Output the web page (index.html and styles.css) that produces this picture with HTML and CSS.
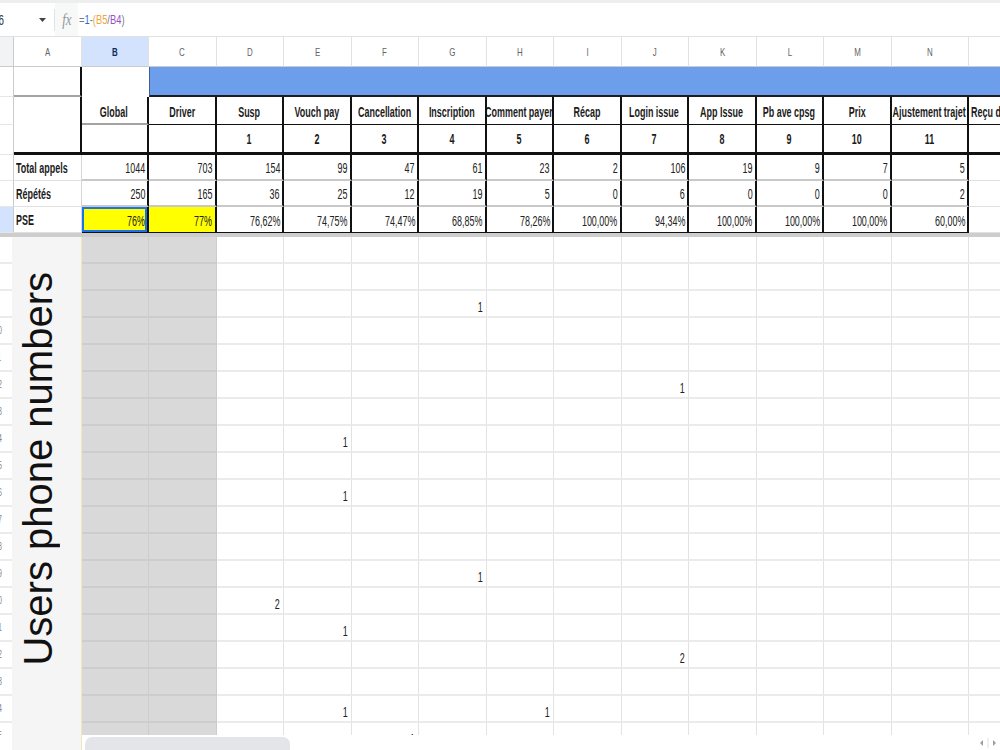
FILE: index.html
```html
<!DOCTYPE html>
<html lang="fr">
<head>
<meta charset="utf-8">
<title>Appels répétés – PSE</title>
<link rel="stylesheet" href="styles.css">
</head>
<body>
<div class="app">
  <div class="toolbar-edge"></div>

  <div class="fbar">
    <div class="namebox"><span class="tx">B6</span></div>
    <svg class="caret" width="7" height="4" viewBox="0 0 7 4"><path d="M0 0h7L3.5 4z" fill="#444"/></svg>
    <div class="sep"></div>
    <div class="fx"><span class="tx">fx</span></div>
    <div class="formula"><span class="tx"><span class="op">=</span><span class="num">1</span><span class="op">-</span><span class="ref1">(B5</span><span class="op">/</span><span class="ref2">B4</span><span class="op">)</span></span></div>
  </div>

  <!-- frozen header rows -->
  <div class="sheet frozen">
    <div class="c hd rn0"></div>
    <div class="c hd"><span class="tx">A</span></div>
    <div class="c hd on"><span class="tx">B</span></div>
    <div class="c hd"><span class="tx">C</span></div>
    <div class="c hd"><span class="tx">D</span></div>
    <div class="c hd"><span class="tx">E</span></div>
    <div class="c hd"><span class="tx">F</span></div>
    <div class="c hd"><span class="tx">G</span></div>
    <div class="c hd"><span class="tx">H</span></div>
    <div class="c hd"><span class="tx">I</span></div>
    <div class="c hd"><span class="tx">J</span></div>
    <div class="c hd"><span class="tx">K</span></div>
    <div class="c hd"><span class="tx">L</span></div>
    <div class="c hd"><span class="tx">M</span></div>
    <div class="c hd"><span class="tx">N</span></div>
    <div class="c hd"><span class="tx">O</span></div>

    <div class="c rn"></div>
    <div class="c a1"></div>
    <div class="c b1"></div>
    <div class="c band"></div>

    <div class="c rn"></div>
    <div class="c a23"></div>
    <div class="c th b2"><span class="tx">Global</span></div>
    <div class="c th"><span class="tx">Driver</span></div>
    <div class="c th"><span class="tx">Susp</span></div>
    <div class="c th"><span class="tx">Vouch pay</span></div>
    <div class="c th"><span class="tx">Cancellation</span></div>
    <div class="c th"><span class="tx">Inscription</span></div>
    <div class="c th"><span class="tx">Comment payer</span></div>
    <div class="c th"><span class="tx">Récap</span></div>
    <div class="c th"><span class="tx">Login issue</span></div>
    <div class="c th"><span class="tx">App Issue</span></div>
    <div class="c th"><span class="tx">Pb ave cpsg</span></div>
    <div class="c th"><span class="tx">Prix</span></div>
    <div class="c th"><span class="tx">Ajustement trajet</span></div>
    <div class="c th l"><span class="tx">Reçu de course</span></div>

    <div class="c rn"></div>
    <div class="c b3"></div>
    <div class="c tn"></div>
    <div class="c tn"><span class="tx">1</span></div>
    <div class="c tn"><span class="tx">2</span></div>
    <div class="c tn"><span class="tx">3</span></div>
    <div class="c tn"><span class="tx">4</span></div>
    <div class="c tn"><span class="tx">5</span></div>
    <div class="c tn"><span class="tx">6</span></div>
    <div class="c tn"><span class="tx">7</span></div>
    <div class="c tn"><span class="tx">8</span></div>
    <div class="c tn"><span class="tx">9</span></div>
    <div class="c tn"><span class="tx">10</span></div>
    <div class="c tn"><span class="tx">11</span></div>
    <div class="c tn"></div>

    <div class="c rn"></div>
    <div class="c lab"><span class="tx">Total appels</span></div>
    <div class="c n"><span class="tx">1044</span></div>
    <div class="c n"><span class="tx">703</span></div>
    <div class="c n"><span class="tx">154</span></div>
    <div class="c n"><span class="tx">99</span></div>
    <div class="c n"><span class="tx">47</span></div>
    <div class="c n"><span class="tx">61</span></div>
    <div class="c n"><span class="tx">23</span></div>
    <div class="c n"><span class="tx">2</span></div>
    <div class="c n"><span class="tx">106</span></div>
    <div class="c n"><span class="tx">19</span></div>
    <div class="c n"><span class="tx">9</span></div>
    <div class="c n"><span class="tx">7</span></div>
    <div class="c n"><span class="tx">5</span></div>
    <div class="c o"></div>

    <div class="c rn"></div>
    <div class="c lab"><span class="tx">Répétés</span></div>
    <div class="c n"><span class="tx">250</span></div>
    <div class="c n"><span class="tx">165</span></div>
    <div class="c n"><span class="tx">36</span></div>
    <div class="c n"><span class="tx">25</span></div>
    <div class="c n"><span class="tx">12</span></div>
    <div class="c n"><span class="tx">19</span></div>
    <div class="c n"><span class="tx">5</span></div>
    <div class="c n"><span class="tx">0</span></div>
    <div class="c n"><span class="tx">6</span></div>
    <div class="c n"><span class="tx">0</span></div>
    <div class="c n"><span class="tx">0</span></div>
    <div class="c n"><span class="tx">0</span></div>
    <div class="c n"><span class="tx">2</span></div>
    <div class="c o"></div>

    <div class="c rn on"></div>
    <div class="c lab"><span class="tx">PSE</span></div>
    <div class="c n p sel"><span class="tx">76%</span></div>
    <div class="c n p yel"><span class="tx">77%</span></div>
    <div class="c n p"><span class="tx">76,62%</span></div>
    <div class="c n p"><span class="tx">74,75%</span></div>
    <div class="c n p"><span class="tx">74,47%</span></div>
    <div class="c n p"><span class="tx">68,85%</span></div>
    <div class="c n p"><span class="tx">78,26%</span></div>
    <div class="c n p"><span class="tx">100,00%</span></div>
    <div class="c n p"><span class="tx">94,34%</span></div>
    <div class="c n p"><span class="tx">100,00%</span></div>
    <div class="c n p"><span class="tx">100,00%</span></div>
    <div class="c n p"><span class="tx">100,00%</span></div>
    <div class="c n p"><span class="tx">60,00%</span></div>
    <div class="c o"></div>
  </div>

  <!-- scrolling rows: one tick per call reason -->
  <div class="sheet pane">
    <div class="c rn"><span class="tx">7</span></div><div class="c g"></div><div class="c g s"></div><div class="c g s"></div><div class="c g"></div><div class="c g"></div><div class="c g"></div><div class="c g"></div><div class="c g"></div><div class="c g"></div><div class="c g"></div><div class="c g"></div><div class="c g"></div><div class="c g"></div><div class="c g"></div><div class="c g"></div>
    <div class="c rn"><span class="tx">8</span></div><div class="c g"></div><div class="c g s"></div><div class="c g s"></div><div class="c g"></div><div class="c g"></div><div class="c g"></div><div class="c g"></div><div class="c g"></div><div class="c g"></div><div class="c g"></div><div class="c g"></div><div class="c g"></div><div class="c g"></div><div class="c g"></div><div class="c g"></div>
    <div class="c rn"><span class="tx">9</span></div><div class="c g"></div><div class="c g s"></div><div class="c g s"></div><div class="c g"></div><div class="c g"></div><div class="c g"></div><div class="c g v"><span class="tx">1</span></div><div class="c g"></div><div class="c g"></div><div class="c g"></div><div class="c g"></div><div class="c g"></div><div class="c g"></div><div class="c g"></div><div class="c g"></div>
    <div class="c rn"><span class="tx">10</span></div><div class="c g"></div><div class="c g s"></div><div class="c g s"></div><div class="c g"></div><div class="c g"></div><div class="c g"></div><div class="c g"></div><div class="c g"></div><div class="c g"></div><div class="c g"></div><div class="c g"></div><div class="c g"></div><div class="c g"></div><div class="c g"></div><div class="c g"></div>
    <div class="c rn"><span class="tx">11</span></div><div class="c g"></div><div class="c g s"></div><div class="c g s"></div><div class="c g"></div><div class="c g"></div><div class="c g"></div><div class="c g"></div><div class="c g"></div><div class="c g"></div><div class="c g"></div><div class="c g"></div><div class="c g"></div><div class="c g"></div><div class="c g"></div><div class="c g"></div>
    <div class="c rn"><span class="tx">12</span></div><div class="c g"></div><div class="c g s"></div><div class="c g s"></div><div class="c g"></div><div class="c g"></div><div class="c g"></div><div class="c g"></div><div class="c g"></div><div class="c g"></div><div class="c g v"><span class="tx">1</span></div><div class="c g"></div><div class="c g"></div><div class="c g"></div><div class="c g"></div><div class="c g"></div>
    <div class="c rn"><span class="tx">13</span></div><div class="c g"></div><div class="c g s"></div><div class="c g s"></div><div class="c g"></div><div class="c g"></div><div class="c g"></div><div class="c g"></div><div class="c g"></div><div class="c g"></div><div class="c g"></div><div class="c g"></div><div class="c g"></div><div class="c g"></div><div class="c g"></div><div class="c g"></div>
    <div class="c rn"><span class="tx">14</span></div><div class="c g"></div><div class="c g s"></div><div class="c g s"></div><div class="c g"></div><div class="c g v"><span class="tx">1</span></div><div class="c g"></div><div class="c g"></div><div class="c g"></div><div class="c g"></div><div class="c g"></div><div class="c g"></div><div class="c g"></div><div class="c g"></div><div class="c g"></div><div class="c g"></div>
    <div class="c rn"><span class="tx">15</span></div><div class="c g"></div><div class="c g s"></div><div class="c g s"></div><div class="c g"></div><div class="c g"></div><div class="c g"></div><div class="c g"></div><div class="c g"></div><div class="c g"></div><div class="c g"></div><div class="c g"></div><div class="c g"></div><div class="c g"></div><div class="c g"></div><div class="c g"></div>
    <div class="c rn"><span class="tx">16</span></div><div class="c g"></div><div class="c g s"></div><div class="c g s"></div><div class="c g"></div><div class="c g v"><span class="tx">1</span></div><div class="c g"></div><div class="c g"></div><div class="c g"></div><div class="c g"></div><div class="c g"></div><div class="c g"></div><div class="c g"></div><div class="c g"></div><div class="c g"></div><div class="c g"></div>
    <div class="c rn"><span class="tx">17</span></div><div class="c g"></div><div class="c g s"></div><div class="c g s"></div><div class="c g"></div><div class="c g"></div><div class="c g"></div><div class="c g"></div><div class="c g"></div><div class="c g"></div><div class="c g"></div><div class="c g"></div><div class="c g"></div><div class="c g"></div><div class="c g"></div><div class="c g"></div>
    <div class="c rn"><span class="tx">18</span></div><div class="c g"></div><div class="c g s"></div><div class="c g s"></div><div class="c g"></div><div class="c g"></div><div class="c g"></div><div class="c g"></div><div class="c g"></div><div class="c g"></div><div class="c g"></div><div class="c g"></div><div class="c g"></div><div class="c g"></div><div class="c g"></div><div class="c g"></div>
    <div class="c rn"><span class="tx">19</span></div><div class="c g"></div><div class="c g s"></div><div class="c g s"></div><div class="c g"></div><div class="c g"></div><div class="c g"></div><div class="c g v"><span class="tx">1</span></div><div class="c g"></div><div class="c g"></div><div class="c g"></div><div class="c g"></div><div class="c g"></div><div class="c g"></div><div class="c g"></div><div class="c g"></div>
    <div class="c rn"><span class="tx">20</span></div><div class="c g"></div><div class="c g s"></div><div class="c g s"></div><div class="c g v"><span class="tx">2</span></div><div class="c g"></div><div class="c g"></div><div class="c g"></div><div class="c g"></div><div class="c g"></div><div class="c g"></div><div class="c g"></div><div class="c g"></div><div class="c g"></div><div class="c g"></div><div class="c g"></div>
    <div class="c rn"><span class="tx">21</span></div><div class="c g"></div><div class="c g s"></div><div class="c g s"></div><div class="c g"></div><div class="c g v"><span class="tx">1</span></div><div class="c g"></div><div class="c g"></div><div class="c g"></div><div class="c g"></div><div class="c g"></div><div class="c g"></div><div class="c g"></div><div class="c g"></div><div class="c g"></div><div class="c g"></div>
    <div class="c rn"><span class="tx">22</span></div><div class="c g"></div><div class="c g s"></div><div class="c g s"></div><div class="c g"></div><div class="c g"></div><div class="c g"></div><div class="c g"></div><div class="c g"></div><div class="c g"></div><div class="c g v"><span class="tx">2</span></div><div class="c g"></div><div class="c g"></div><div class="c g"></div><div class="c g"></div><div class="c g"></div>
    <div class="c rn"><span class="tx">23</span></div><div class="c g"></div><div class="c g s"></div><div class="c g s"></div><div class="c g"></div><div class="c g"></div><div class="c g"></div><div class="c g"></div><div class="c g"></div><div class="c g"></div><div class="c g"></div><div class="c g"></div><div class="c g"></div><div class="c g"></div><div class="c g"></div><div class="c g"></div>
    <div class="c rn"><span class="tx">24</span></div><div class="c g"></div><div class="c g s"></div><div class="c g s"></div><div class="c g"></div><div class="c g v"><span class="tx">1</span></div><div class="c g"></div><div class="c g"></div><div class="c g v"><span class="tx">1</span></div><div class="c g"></div><div class="c g"></div><div class="c g"></div><div class="c g"></div><div class="c g"></div><div class="c g"></div><div class="c g"></div>
    <div class="c rn"><span class="tx">25</span></div><div class="c g"></div><div class="c g s"></div><div class="c g s"></div><div class="c g"></div><div class="c g"></div><div class="c g v"><span class="tx">1</span></div><div class="c g"></div><div class="c g"></div><div class="c g"></div><div class="c g"></div><div class="c g"></div><div class="c g"></div><div class="c g"></div><div class="c g"></div><div class="c g"></div>
  </div>

  <div class="hscroll">
    <div class="thumb"></div>
    <svg class="arrows" width="22" height="12" viewBox="0 0 22 12">
      <path d="M6 3v6L3 6z" fill="#9aa0a6"/>
      <path d="M11 1v10" stroke="#e0e0e0"/>
      <path d="M16 3v6l3-3z" fill="#9aa0a6"/>
    </svg>
  </div>

  <div class="side-note"><span class="side-text">Users phone numbers</span></div>
</div>
</body>
</html>
```

FILE: styles.css
```css
* { box-sizing: border-box; }

html, body { margin: 0; padding: 0; }

body {
  background: #fff;
  font-family: "Liberation Sans", Arial, sans-serif;
  color: #1b1b1b;
}

.app {
  position: relative;
  width: 1000px;
  height: 750px;
  overflow: hidden;
}

.tx {
  display: inline-block;
  white-space: nowrap;
  transform: scaleX(.64);
}

/* ---------- formula bar ---------- */
.toolbar-edge { height: 3px; background: #eceef0; }

.fbar {
  height: 34px;
  display: flex;
  align-items: center;
  border-bottom: 1px solid #e1e1e1;
}

.namebox {
  width: 39px;
  overflow: hidden;
  font-size: 14px;
  color: #333;
}
.namebox .tx { margin-left: -8px; transform-origin: left center; transform: scaleX(.7); }

.caret { display: block; }

.sep { width: 1px; height: 22px; margin-left: 8px; background: #e3e3e3; }

.fx {
  width: 23px;
  height: 33px;
  display: flex;
  align-items: center;
  justify-content: center;
  background: #f7f8f8;
  font-family: "Liberation Serif", serif;
  font-style: italic;
  font-size: 16px;
  color: #8f959b;
}
.fx .tx { transform: scaleX(.8); }

.formula { padding-left: 1px; font-size: 13px; }
.formula .tx { transform-origin: left center; transform: scaleX(.72); }
.formula .op { color: #6f7a86; }
.formula .num { color: #1f6fd6; }
.formula .ref1 { color: #f0a33a; }
.formula .ref2 { color: #9a4fc7; }

/* ---------- sheet grid ---------- */
.sheet {
  display: grid;
  grid-template-columns: 14px repeat(13, 67.5px) 77.5px 80px;
}

.frozen {
  grid-template-rows: 30px 30px 28px 30px 26px 26px 26px;
  border-bottom: 4px solid #cdcdcd;
}

.pane {
  grid-auto-rows: 27px;
  height: 498px;
  overflow: hidden;
}

.c {
  min-width: 0;
  overflow: hidden;
  display: flex;
  align-items: center;
  justify-content: center;
  font-size: 14px;
  line-height: 16px;
}

/* column letters */
.hd {
  padding-top: 1px;
  border-right: 1px solid #e2e2e2;
  border-bottom: 1px solid #c9cbcc;
  font-size: 11px;
  color: #5f6368;
}
.hd .tx { transform: scaleX(.72); }
.hd.on { background: #d3e3fd; color: #0b2c5e; font-weight: bold; }
.rn0 { background: #f1f3f4; border-right: 1px solid #c9cbcc; }

/* row numbers (clipped at the window edge) */
.rn {
  justify-content: flex-start;
  border-right: 1px solid #c9cbcc;
  border-bottom: 1px solid #e6e6e6;
  font-size: 10px;
  color: #80868b;
}
.rn .tx { margin-left: -6px; transform-origin: left center; transform: scaleX(.7); }
.rn.on { background: #d3e3fd; }

/* table head */
.a1 { border-bottom: 2px solid #a3a3a3; border-right: 2px solid #111; }
.band {
  grid-column: span 13;
  background: #6d9eeb;
  border-left: 1px solid #3d5f96;
  border-bottom: 2px solid #1d1d1d;
}
.a23 { grid-row: span 2; border-right: 2px solid #111; border-bottom: 3px solid #111; }
.th {
  padding-top: 3px;
  font-weight: bold;
  border-right: 2px solid #111;
  border-bottom: 1px solid #111;
}
.th.b2 { border-bottom: 2px solid #a3a3a3; }
.b3 { border-right: 2px solid #111; border-bottom: 3px solid #111; }
.tn { font-weight: bold; border-right: 2px solid #111; border-bottom: 3px solid #111; }

.l { justify-content: flex-start; padding-left: 2px; }
.l .tx { transform-origin: left center; }

/* table body */
.lab {
  justify-content: flex-start;
  padding-left: 2px;
  font-weight: bold;
  border-right: 1px solid #d6d6d6;
  border-bottom: 1px solid #e0e0e0;
}
.lab .tx { transform-origin: left center; }

.n {
  justify-content: flex-end;
  align-items: flex-end;
  padding: 0 2px 3px 0;
  color: #222;
  border-right: 2px solid #111;
  border-bottom: 2px solid #c8c8c8;
}
.n .tx { transform-origin: right center; }
.n.p { border-bottom: 1px solid #111; }
.yel { background: #ffff00; }
.sel { background: #ffff00; box-shadow: inset 0 0 0 2px #1a73e8; }
.o { border-bottom: 1px solid #e0e0e0; }

/* scrolling grid */
.pane .rn { border-bottom: 2px solid #ebebeb; }
.g { border-right: 1px solid #e3e3e3; border-bottom: 2px solid #ebebeb; }
.g.s { background: #d9d9d9; border-color: #cdcdcd; }
.v {
  justify-content: flex-end;
  align-items: flex-end;
  padding: 0 3px 1px 0;
  color: #222;
}
.v .tx { transform-origin: right center; }

/* horizontal scrollbar */
.hscroll {
  height: 15px;
  display: flex;
  align-items: flex-end;
  background: #fff;
}
.thumb {
  margin-left: 85px;
  width: 205px;
  height: 13px;
  border-radius: 7px 7px 0 0;
  background: #e3e5e8;
}
.arrows { margin-left: auto; margin-right: 1px; margin-bottom: 1px; display: block; }

/* vertical label over the first column */
.side-note {
  position: absolute;
  left: 12px;
  top: 237px;
  bottom: 0;
  width: 70px;
  display: flex;
  align-items: center;
  padding: 0 0 49px 6px;
  background: #f5f5f5;
  border-right: 1px solid #f1e6bd;
}
.side-text {
  writing-mode: vertical-rl;
  transform: rotate(180deg);
  font-family: "Liberation Sans", Arial, sans-serif;
  font-size: 40px;
  line-height: 40px;
  color: #111;
  white-space: nowrap;
}
```
